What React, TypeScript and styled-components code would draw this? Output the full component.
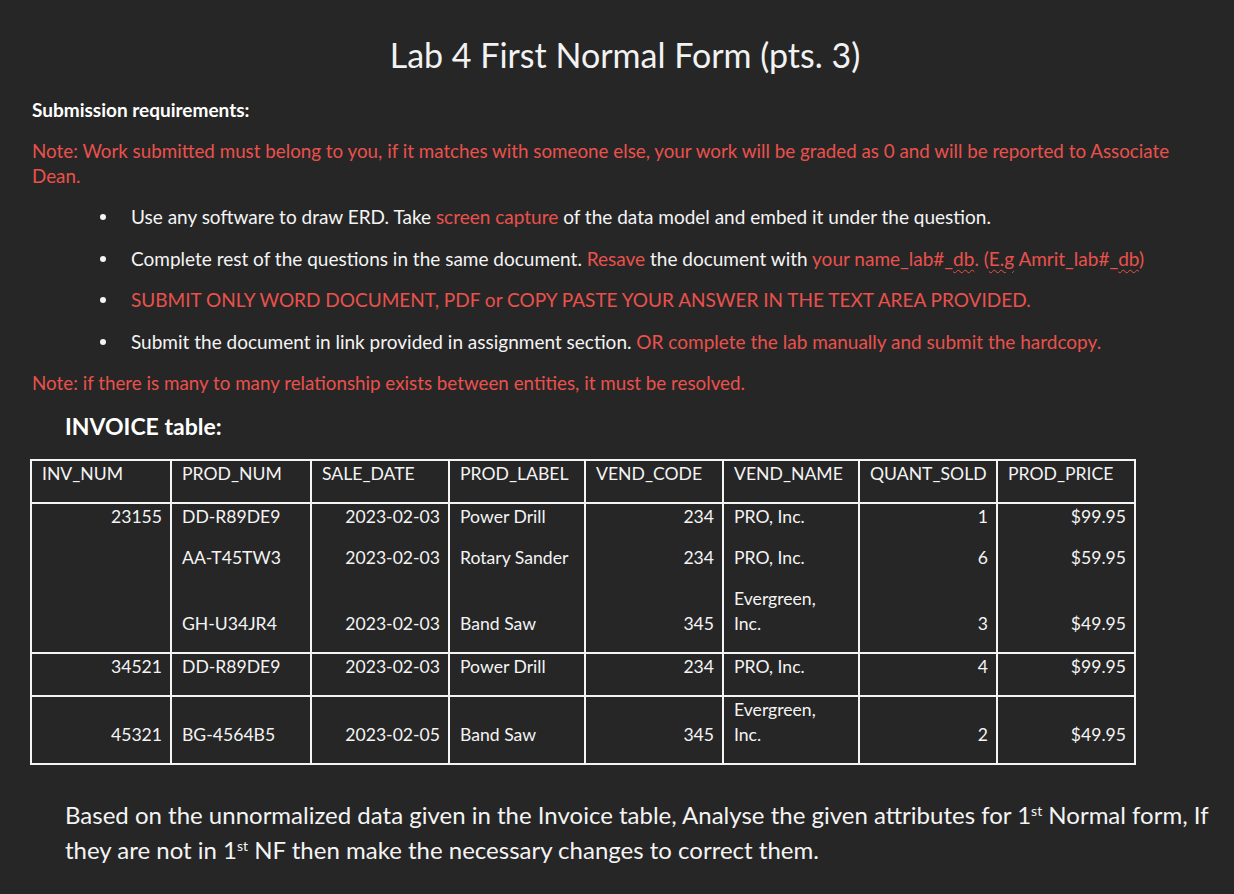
import React from "react";
import styled, { createGlobalStyle } from "styled-components";

const RED = "#ea514c";

interface InvoiceRow {
  cells: React.ReactNode[];
  continued?: boolean;
}

const columns = [
  { name: "INV_NUM", width: 140, align: "right" },
  { name: "PROD_NUM", width: 140, align: "left" },
  { name: "SALE_DATE", width: 138, align: "right" },
  { name: "PROD_LABEL", width: 136, align: "left" },
  { name: "VEND_CODE", width: 138, align: "right" },
  { name: "VEND_NAME", width: 136, align: "left" },
  { name: "QUANT_SOLD", width: 138, align: "right" },
  { name: "PROD_PRICE", width: 138, align: "right" },
];

const evergreen = (
  <>
    Evergreen,
    <br />
    Inc.
  </>
);

const rows: InvoiceRow[] = [
  { cells: ["23155", "DD-R89DE9", "2023-02-03", "Power Drill", "234", "PRO, Inc.", "1", "$99.95"] },
  { cells: ["", "AA-T45TW3", "2023-02-03", "Rotary Sander", "234", "PRO, Inc.", "6", "$59.95"], continued: true },
  { cells: ["", "GH-U34JR4", "2023-02-03", "Band Saw", "345", evergreen, "3", "$49.95"], continued: true },
  { cells: ["34521", "DD-R89DE9", "2023-02-03", "Power Drill", "234", "PRO, Inc.", "4", "$99.95"] },
  { cells: ["45321", "BG-4564B5", "2023-02-05", "Band Saw", "345", evergreen, "2", "$49.95"] },
];

export default function App() {
  return (
    <>
      <GlobalStyle />
      <Page>
        <Title>Lab 4 First Normal Form (pts. 3)</Title>
        <Heading>Submission requirements:</Heading>
        <Note>
          Note: Work submitted must belong to you, if it matches with someone
          else, your work will be graded as 0 and will be reported to Associate
          Dean.
        </Note>
        <BulletList>
          <Bullet>
            Use any software to draw ERD. Take <Red>screen capture</Red> of the
            data model and embed it under the question.
          </Bullet>
          <Bullet>
            Complete rest of the questions in the same document.{" "}
            <Red>Resave</Red> the document with{" "}
            <Red>
              your name_lab#_<Squiggle>db</Squiggle>. (<Squiggle>E.g</Squiggle>{" "}
              Amrit_lab#_<Squiggle>db</Squiggle>)
            </Red>
          </Bullet>
          <Bullet>
            <Red>
              SUBMIT ONLY WORD DOCUMENT, PDF or COPY PASTE YOUR ANSWER IN THE
              TEXT AREA PROVIDED.
            </Red>
          </Bullet>
          <Bullet>
            Submit the document in link provided in assignment section.{" "}
            <Red>OR complete the lab manually and submit the hardcopy.</Red>
          </Bullet>
        </BulletList>
        <Note>
          Note: if there is many to many relationship exists between entities,
          it must be resolved.
        </Note>
        <TableTitle>INVOICE table:</TableTitle>
        <Table>
          <colgroup>
            {columns.map((c) => (
              <Col key={c.name} $w={c.width} />
            ))}
          </colgroup>
          <thead>
            <tr>
              {columns.map((c) => (
                <Th key={c.name}>{c.name}</Th>
              ))}
            </tr>
          </thead>
          <tbody>
            {rows.map((row, i) => (
              <tr key={i}>
                {row.cells.map((cell, j) => (
                  <Td
                    key={j}
                    $align={columns[j].align}
                    $continued={!!row.continued}
                  >
                    {cell}
                  </Td>
                ))}
              </tr>
            ))}
          </tbody>
        </Table>
        <Question>
          Based on the unnormalized data given in the Invoice table, Analyse the
          given attributes for 1<sup>st</sup> Normal form, If they are not in 1
          <sup>st</sup> NF then make the necessary changes to correct them.
        </Question>
      </Page>
    </>
  );
}

const GlobalStyle = createGlobalStyle`
  html, body {
    margin: 0;
    background: #262626;
  }
  body {
    font-family: Lato, "Open Sans", sans-serif;
    color: #f4f4f4;
  }
`;

const Page = styled.div`
  width: 1234px;
  height: 894px;
  box-sizing: border-box;
  padding: 35px 24px 0 32px;
  overflow: hidden;
  background: #262626;
`;

const Title = styled.h1`
  margin: 0;
  padding-left: 8px;
  text-align: center;
  font-size: 34px;
  line-height: 40px;
  font-weight: 400;
  color: #f2f2f2;
`;

const Heading = styled.div`
  margin-top: 23px;
  font-size: 19px;
  line-height: 24px;
  font-weight: 700;
  color: #ffffff;
`;

const Note = styled.p`
  margin: 16px 0 0;
  max-width: 1165px;
  font-size: 18.8px;
  line-height: 25px;
  color: ${RED};
`;

const BulletList = styled.ul`
  margin: 16px 0 0;
  padding: 0 0 0 99px;
  list-style: none;
  display: flex;
  flex-direction: column;
  gap: 16.7px;
`;

const Bullet = styled.li`
  position: relative;
  font-size: 19px;
  line-height: 25px;
  color: #f4f4f4;

  &::before {
    content: "";
    position: absolute;
    left: -31px;
    top: 10px;
    width: 6px;
    height: 6px;
    border-radius: 50%;
    background: #f4f4f4;
  }
`;

const Red = styled.span`
  color: ${RED};
`;

const Squiggle = styled.span`
  text-decoration: underline wavy ${RED};
  text-decoration-thickness: 1px;
  text-underline-offset: 3px;
`;

const TableTitle = styled.h2`
  margin: 16px 0 0 33px;
  font-size: 23px;
  line-height: 30px;
  font-weight: 700;
  color: #ffffff;
`;

const Table = styled.table`
  margin: 18px 0 0 -2px;
  width: 1104px;
  table-layout: fixed;
  border-collapse: collapse;
  font-size: 17.6px;
  line-height: 25px;
  color: #f4f4f4;
`;

const Col = styled.col<{ $w: number }>`
  width: ${({ $w }) => $w}px;
`;

const Th = styled.th`
  border: 2px solid #f4f4f4;
  padding: 0 8px 16px 10px;
  text-align: left;
  vertical-align: bottom;
  font-weight: 400;
  white-space: nowrap;
  overflow: hidden;
`;

const Td = styled.td<{ $align: string; $continued: boolean }>`
  border: 2px solid #f4f4f4;
  border-top-style: ${({ $continued }) => ($continued ? "hidden" : "solid")};
  padding: 0 8px 16px 10px;
  text-align: ${({ $align }) => $align};
  vertical-align: bottom;
  white-space: nowrap;
`;

const Question = styled.p`
  margin: 32px 0 0 33px;
  font-size: 24px;
  line-height: 35px;
  color: #f4f4f4;

  sup {
    font-size: 14px;
    line-height: 0;
    vertical-align: 8px;
  }
`;
